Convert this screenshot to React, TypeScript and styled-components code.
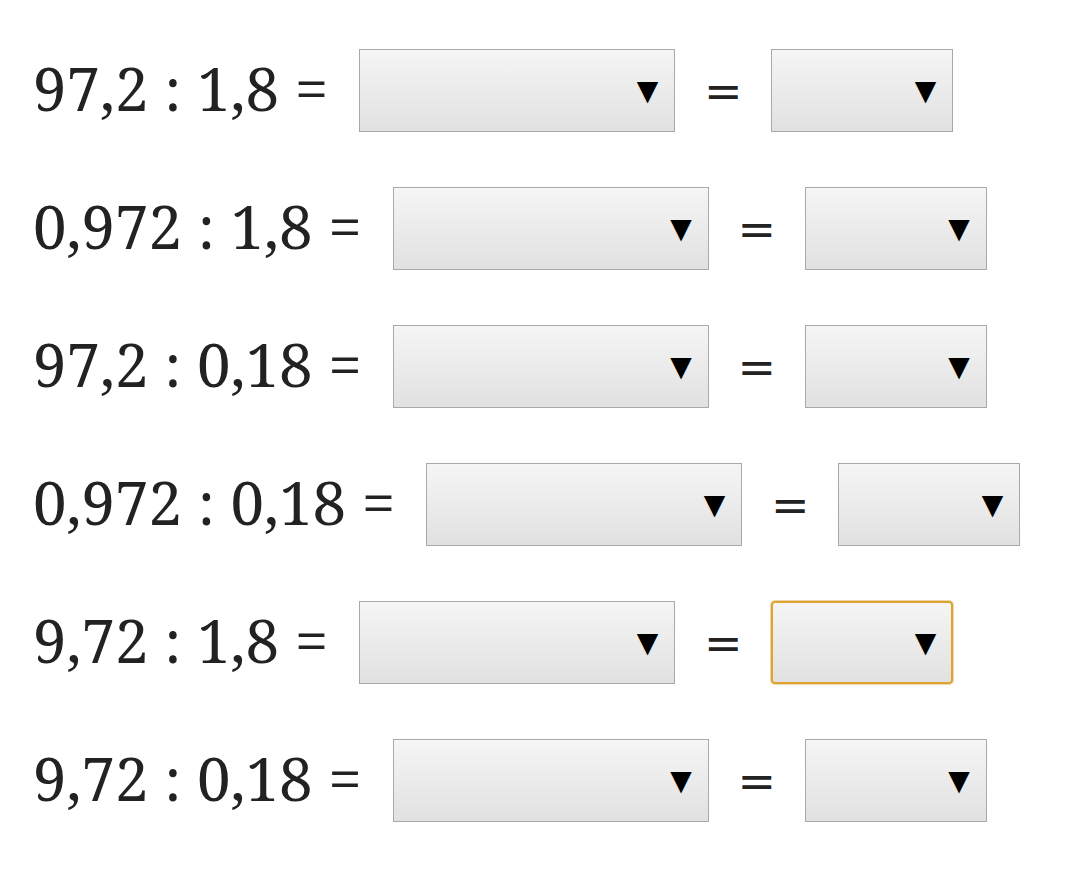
import React from 'react';
import styled, { createGlobalStyle } from 'styled-components';

const Global = createGlobalStyle`
  body {
    margin: 0;
    background: #fff;
  }
`;

interface Row {
    label: string;
    focused?: boolean;
}

const rows: Row[] = [
    { label: '97,2 : 1,8 =' },
    { label: '0,972 : 1,8 =' },
    { label: '97,2 : 0,18 =' },
    { label: '0,972 : 0,18 =' },
    { label: '9,72 : 1,8 =', focused: true },
    { label: '9,72 : 0,18 =' },
];

const App: React.FC = () => {
    return <Page>
        <Global />
        {rows.map((r, i) => {
            return <Line key={i}>
                <Label>{r.label}</Label>
                <Picker $width={316}><Arrow>▼</Arrow></Picker>
                <Equals>=</Equals>
                <Picker $width={182} $focused={r.focused}><Arrow>▼</Arrow></Picker>
            </Line>
        })}
    </Page>
}

const Page = styled.div`
    display: flex;
    flex-direction: column;
    gap: 55px;
    padding: 49px 0 0 33px;
    font-family: "Noto Serif", "DejaVu Serif", serif;
    color: #222;
`

const Line = styled.div`
    display: flex;
    align-items: center;
    height: 83px;
`

const Label = styled.span`
    font-size: 60px;
    line-height: 1;
    padding-bottom: 6px;
    margin-right: 31px;
    white-space: nowrap;
`

const Equals = styled.span`
    font-family: "DejaVu Sans", sans-serif;
    font-size: 46px;
    width: 96px;
    text-align: center;
    color: #222;
`

const Picker = styled.button<{ $width: number; $focused?: boolean }>`
    box-sizing: border-box;
    width: ${p => p.$width}px;
    height: 83px;
    display: flex;
    align-items: center;
    justify-content: flex-end;
    padding: 0 ${p => p.$focused ? 15 : 16}px 0 0;
    background: linear-gradient(#f5f5f5, #e1e1e1);
    border: ${p => p.$focused ? '2px solid #dea335' : '1px solid #a9a9a9'};
    border-radius: ${p => p.$focused ? '4px' : '0'};
    box-shadow: ${p => p.$focused ? '0 0 0 1px rgba(222, 163, 53, 0.45)' : 'none'};
    cursor: pointer;
`

const Arrow = styled.span`
    font-family: "DejaVu Sans", sans-serif;
    font-size: 28px;
    line-height: 1;
    color: #000;
`

export default App;
